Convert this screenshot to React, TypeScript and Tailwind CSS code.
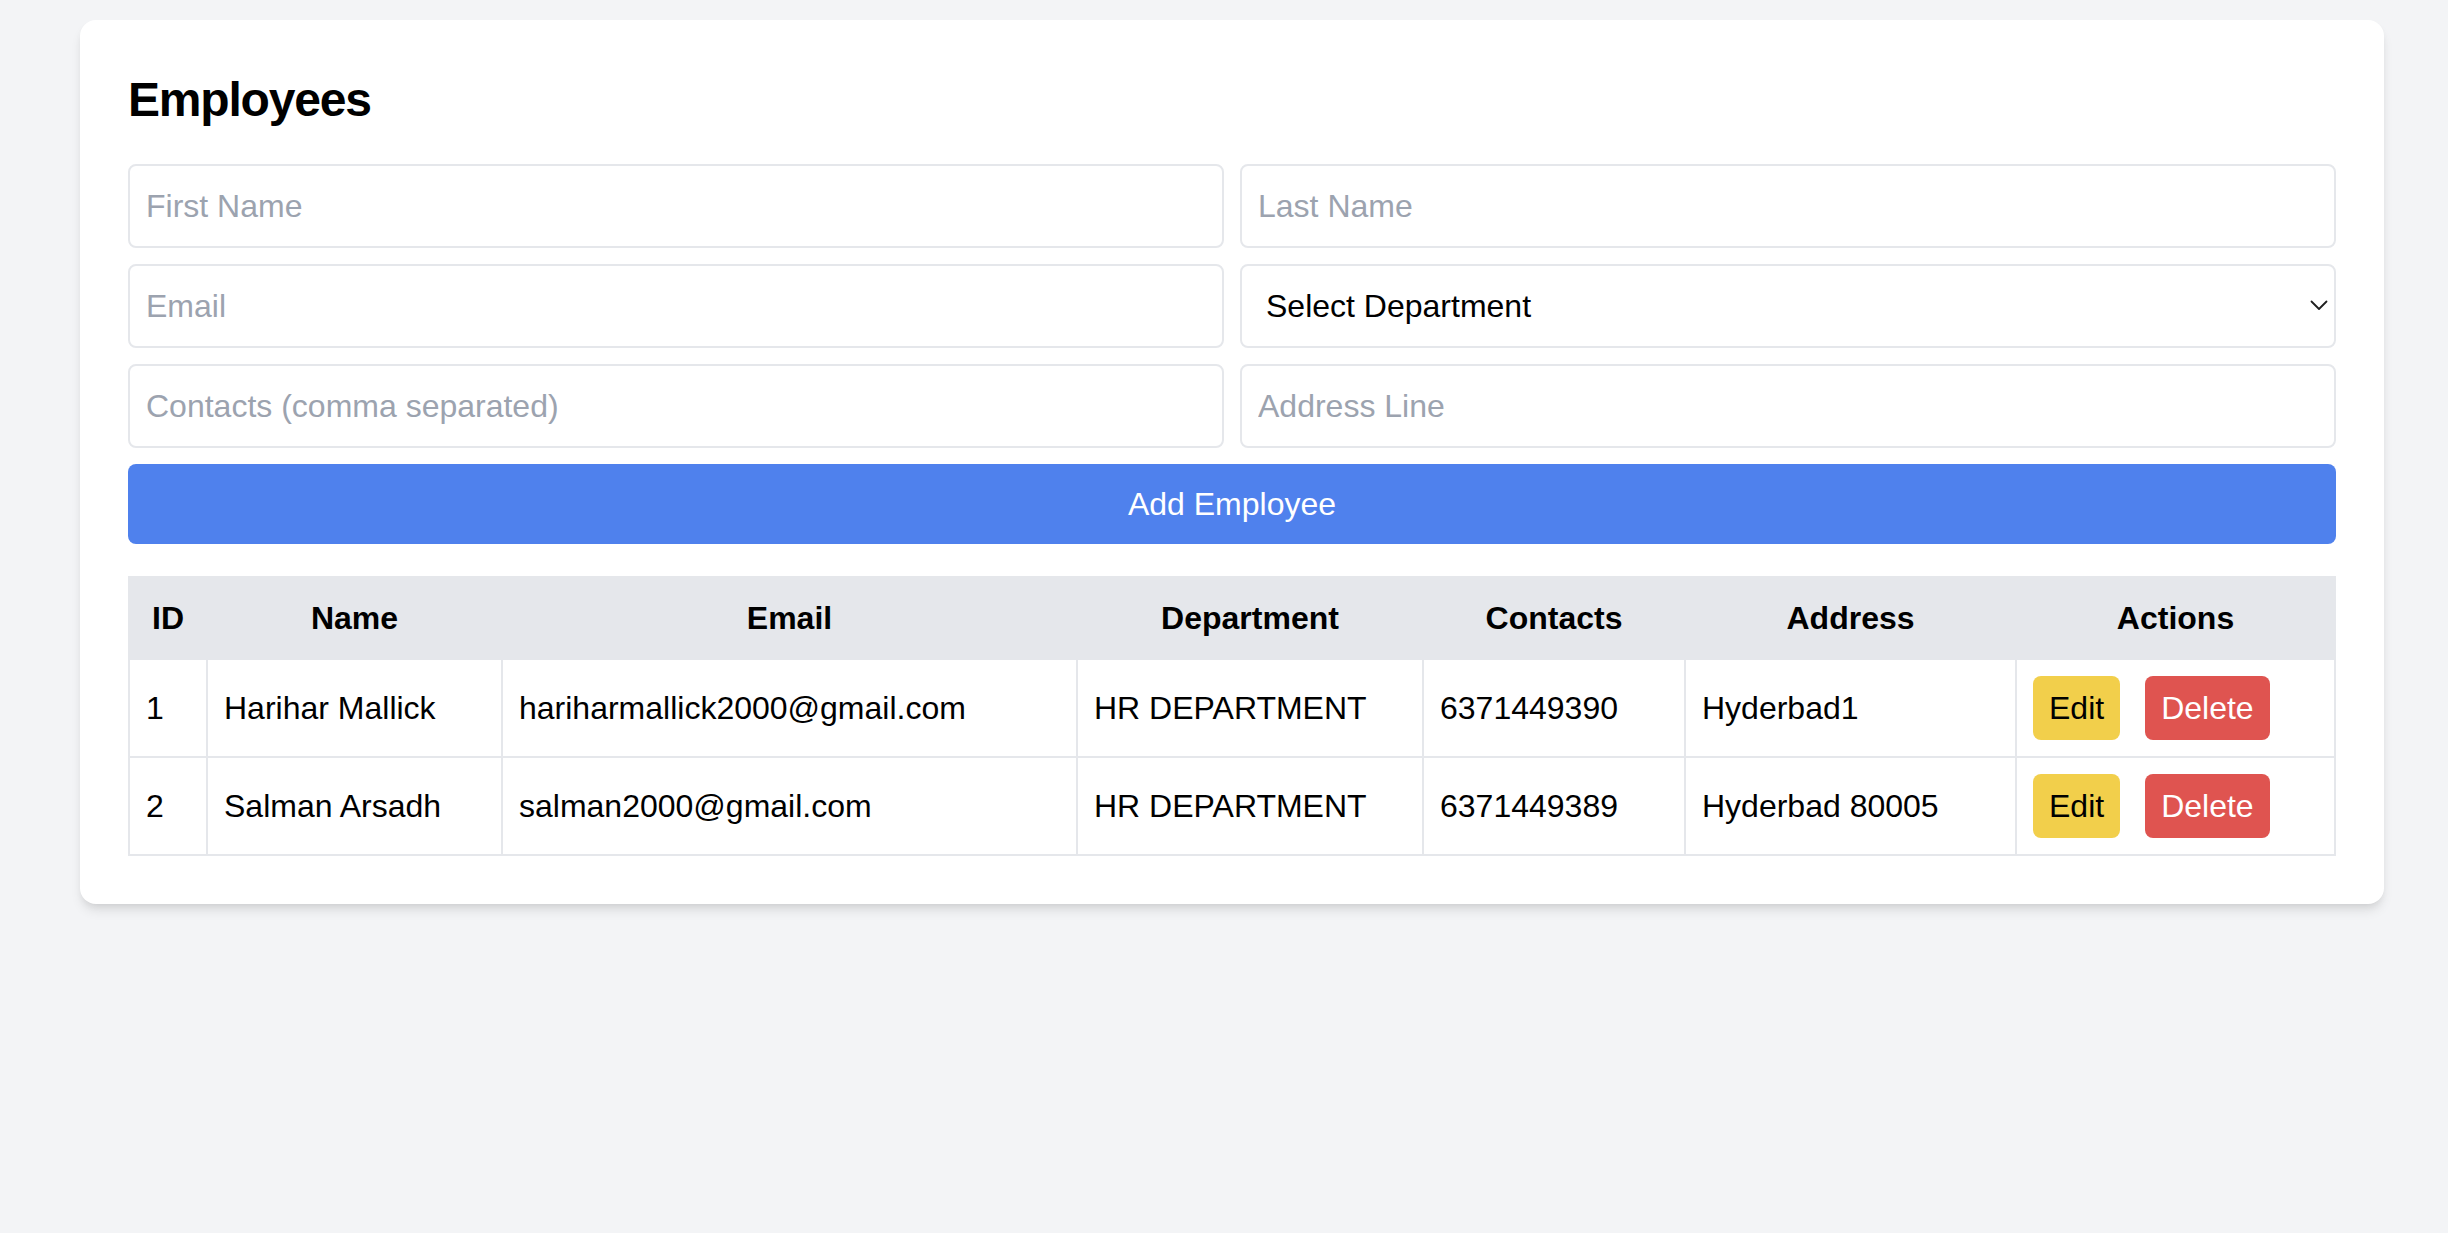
import { ChangeEvent, FormEvent, useState } from "react"

interface Employee {
  id: number
  firstName: string
  lastName: string
  email: string
  department: string
  contacts: string[]
  address: string
}

const initial: Employee[] = [
  {
    id: 1,
    firstName: "Harihar",
    lastName: "Mallick",
    email: "hariharmallick2000@gmail.com",
    department: "HR DEPARTMENT",
    contacts: ["6371449390"],
    address: "Hyderbad1",
  },
  {
    id: 2,
    firstName: "Salman",
    lastName: "Arsadh",
    email: "salman2000@gmail.com",
    department: "HR DEPARTMENT",
    contacts: ["6371449389"],
    address: "Hyderbad 80005",
  },
]

const inputClass =
  "h-[84px] w-full rounded-[8px] border-2 border-[#e5e7eb] bg-white px-[16px] text-[32px] leading-[48px] text-black outline-none placeholder:text-[#9ca3af]"

const thClass = "border-2 border-[#e5e7eb] p-[16px] text-center font-bold leading-[48px]"
const tdClass = "border-2 border-[#e5e7eb] px-[16px] py-[16px] text-left leading-[48px]"

export default function App() {
  const [employees, setEmployees] = useState<Employee[]>(initial)
  const [form, setForm] = useState({
    firstName: "",
    lastName: "",
    email: "",
    department: "",
    contacts: "",
    address: "",
  })

  const onChange = (e: ChangeEvent<HTMLInputElement | HTMLSelectElement>) =>
    setForm({ ...form, [e.target.name]: e.target.value })

  const onSubmit = (e: FormEvent) => {
    e.preventDefault()
    setEmployees([
      ...employees,
      {
        id: employees.length + 1,
        firstName: form.firstName,
        lastName: form.lastName,
        email: form.email,
        department: form.department,
        contacts: form.contacts.split(",").map((c) => c.trim()),
        address: form.address,
      },
    ])
  }

  return (
    <div className="min-h-screen bg-[#f3f4f6] pt-[20px] font-['Liberation_Sans',Arial,sans-serif] text-black">
      <div className="ml-[80px] w-[2304px] rounded-[16px] bg-white p-[48px] shadow-[0_8px_12px_-2px_rgba(0,0,0,0.1),0_4px_8px_-4px_rgba(0,0,0,0.1)]">
        <h2 className="mb-[32px] text-[48px] font-bold leading-[64px] tracking-[-1.2px]">Employees</h2>

        <form onSubmit={onSubmit} className="grid grid-cols-2 gap-[16px]">
          <input name="firstName" value={form.firstName} onChange={onChange} placeholder="First Name" className={inputClass} />
          <input name="lastName" value={form.lastName} onChange={onChange} placeholder="Last Name" className={inputClass} />
          <input name="email" value={form.email} onChange={onChange} placeholder="Email" className={inputClass} />
          <div className="relative">
            <select
              name="department"
              value={form.department}
              onChange={onChange}
              className={inputClass + " appearance-none pl-[24px]"}
            >
              <option value="">Select Department</option>
              <option value="HR DEPARTMENT">HR DEPARTMENT</option>
              <option value="IT DEPARTMENT">IT DEPARTMENT</option>
            </select>
            <svg
              className="pointer-events-none absolute right-[8px] top-[33px] h-[18px] w-[18px]"
              viewBox="0 0 18 18"
              fill="none"
            >
              <path d="M1.5 4.5 9 12l7.5-7.5" stroke="#1f1f1f" strokeWidth="1.8" strokeLinecap="round" strokeLinejoin="round" />
            </svg>
          </div>
          <input name="contacts" value={form.contacts} onChange={onChange} placeholder="Contacts (comma separated)" className={inputClass} />
          <input name="address" value={form.address} onChange={onChange} placeholder="Address Line" className={inputClass} />
          <button
            type="submit"
            className="col-span-2 h-[80px] rounded-[8px] bg-[#4f81ed] text-[32px] leading-[48px] text-white"
          >
            Add Employee
          </button>
        </form>

        <table className="mt-[32px] w-full table-fixed border-collapse border-2 border-[#e5e7eb] text-[32px]">
          <thead className="bg-[#e5e7eb]">
            <tr>
              <th className={thClass + " w-[78px]"}>ID</th>
              <th className={thClass + " w-[295px]"}>Name</th>
              <th className={thClass + " w-[575px]"}>Email</th>
              <th className={thClass + " w-[346px]"}>Department</th>
              <th className={thClass + " w-[262px]"}>Contacts</th>
              <th className={thClass + " w-[331px]"}>Address</th>
              <th className={thClass}>Actions</th>
            </tr>
          </thead>
          <tbody>
            {employees.map((emp) => (
              <tr key={emp.id}>
                <td className={tdClass}>{emp.id}</td>
                <td className={tdClass}>
                  {emp.firstName} {emp.lastName}
                </td>
                <td className={tdClass}>{emp.email}</td>
                <td className={tdClass}>{emp.department}</td>
                <td className={tdClass}>{emp.contacts.join(", ")}</td>
                <td className={tdClass}>{emp.address}</td>
                <td className={tdClass}>
                  <div className="flex gap-[25px]">
                    <button className="rounded-[8px] bg-[#f2cf4b] px-[16px] py-[8px] leading-[48px] text-black">Edit</button>
                    <button
                      onClick={() => setEmployees(employees.filter((x) => x.id !== emp.id))}
                      className="rounded-[8px] bg-[#df5450] px-[16px] py-[8px] leading-[48px] text-white"
                    >
                      Delete
                    </button>
                  </div>
                </td>
              </tr>
            ))}
          </tbody>
        </table>
      </div>
    </div>
  )
}
